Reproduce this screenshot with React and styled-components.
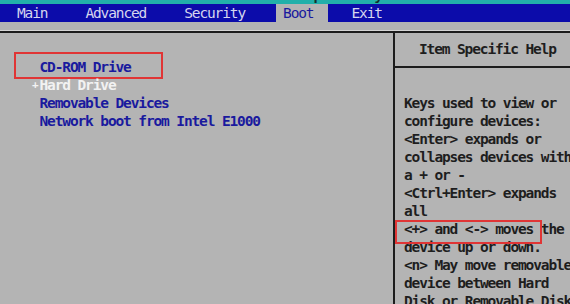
import styled, { createGlobalStyle } from "styled-components";

const GlobalStyle = createGlobalStyle`
  html, body {
    margin: 0;
    padding: 0;
    background: #b4b4b4;
    overflow: hidden;
  }
`;

const tabs = ["Main", "Advanced", "Security", "Boot", "Exit"];

const bootOrder = [
  { label: "CD-ROM Drive", boxed: true },
  { label: "Hard Drive", expandable: true },
  { label: "Removable Devices" },
  { label: "Network boot from Intel E1000" },
];

const App = () => {
  return (
    <>
      <GlobalStyle />
      <Screen>
        <TitleBar>
          <TitleText>PhoenixBIOS Setup Utility</TitleText>
        </TitleBar>
        <MenuBar>
          {tabs.map((t) => (
            <Tab key={t} $active={t === "Boot"}>
              {t}
            </Tab>
          ))}
        </MenuBar>
        <Body>
          <MainPanel>
            <BootList>
              {bootOrder.map((item) => (
                <BootItem
                  key={item.label}
                  $boxed={item.boxed}
                  $light={item.expandable}
                >
                  {item.expandable && <Expander>+</Expander>}
                  {item.label}
                </BootItem>
              ))}
            </BootList>
          </MainPanel>
          <HelpPanel>
            <HelpTitle>Item Specific Help</HelpTitle>
            <HelpText>
              <Line>Keys used to view or</Line>
              <Line>configure devices:</Line>
              <Line>&lt;Enter&gt; expands or</Line>
              <Line>collapses devices with</Line>
              <Line>a + or -</Line>
              <Line>&lt;Ctrl+Enter&gt; expands</Line>
              <Line>all</Line>
              <Line>
                <Marked>&lt;+&gt; and &lt;-&gt; moves</Marked> the
              </Line>
              <Line>device up or down.</Line>
              <Line>&lt;n&gt; May move removable</Line>
              <Line>device between Hard</Line>
              <Line>Disk or Removable Disk</Line>
            </HelpText>
          </HelpPanel>
        </Body>
      </Screen>
    </>
  );
};

const Screen = styled.div`
  width: 570px;
  height: 304px;
  overflow: hidden;
  background: #b4b4b4;
  display: flex;
  flex-direction: column;
  font-family: "DejaVu Sans Mono", "Liberation Mono", monospace;
  font-weight: bold;
  font-size: 14.5px;
  letter-spacing: -1.13px;
  line-height: 18px;
  white-space: pre;
`;

const TitleBar = styled.div`
  height: 4px;
  flex: none;
  overflow: hidden;
  background: #22b0aa;
  padding-left: 192px;
`;

const TitleText = styled.div`
  margin-top: -14px;
  color: #14302e;
`;

const MenuBar = styled.div`
  height: 18px;
  flex: none;
  display: flex;
  gap: 16px;
  padding-left: 10px;
  background: #0c0caa;
`;

const Tab = styled.div`
  padding: 0 15px 0 7px;
  font-weight: normal;
  color: ${(p) => (p.$active ? "#1a1a9e" : "#d6d6ee")};
  background: ${(p) => (p.$active ? "#b4b4b4" : "transparent")};
`;

const Body = styled.div`
  flex: 1;
  display: flex;
  margin-top: 9px;
  border-top: 2px solid #1c1c1c;
  box-shadow: 0 -1px 0 #d4d4d4;
`;

const MainPanel = styled.div`
  width: 393px;
  flex: none;
  border-right: 2px solid #1c1c1c;
`;

const BootList = styled.div`
  padding-top: 25px;
`;

const BootItem = styled.div`
  position: relative;
  height: 18px;
  padding-left: 39.5px;
  color: ${(p) => (p.$light ? "#f2f2f2" : "#1a1a9e")};

  &::after {
    content: "";
    display: ${(p) => (p.$boxed ? "block" : "none")};
    position: absolute;
    left: 14px;
    top: -6px;
    width: 149px;
    height: 27px;
    box-sizing: border-box;
    border: 2px solid #e03535;
  }
`;

const Expander = styled.span`
  display: inline-block;
  width: 7.6px;
  margin-left: -7.6px;
  font-size: 11px;
  vertical-align: top;
`;

const HelpPanel = styled.div`
  flex: 1;
  color: #1e1e1e;
`;

const HelpTitle = styled.div`
  margin-top: 7px;
  height: 18px;
  padding: 0 0 8px 24px;
  border-bottom: 2px solid #1c1c1c;
`;

const HelpText = styled.div`
  padding: 26px 0 0 9px;
`;

const Line = styled.div`
  height: 18px;
`;

const Marked = styled.span`
  position: relative;

  &::after {
    content: "";
    position: absolute;
    left: -9px;
    top: -1px;
    width: 147px;
    height: 24px;
    box-sizing: border-box;
    border: 2px solid #e03535;
  }
`;

export default App;
